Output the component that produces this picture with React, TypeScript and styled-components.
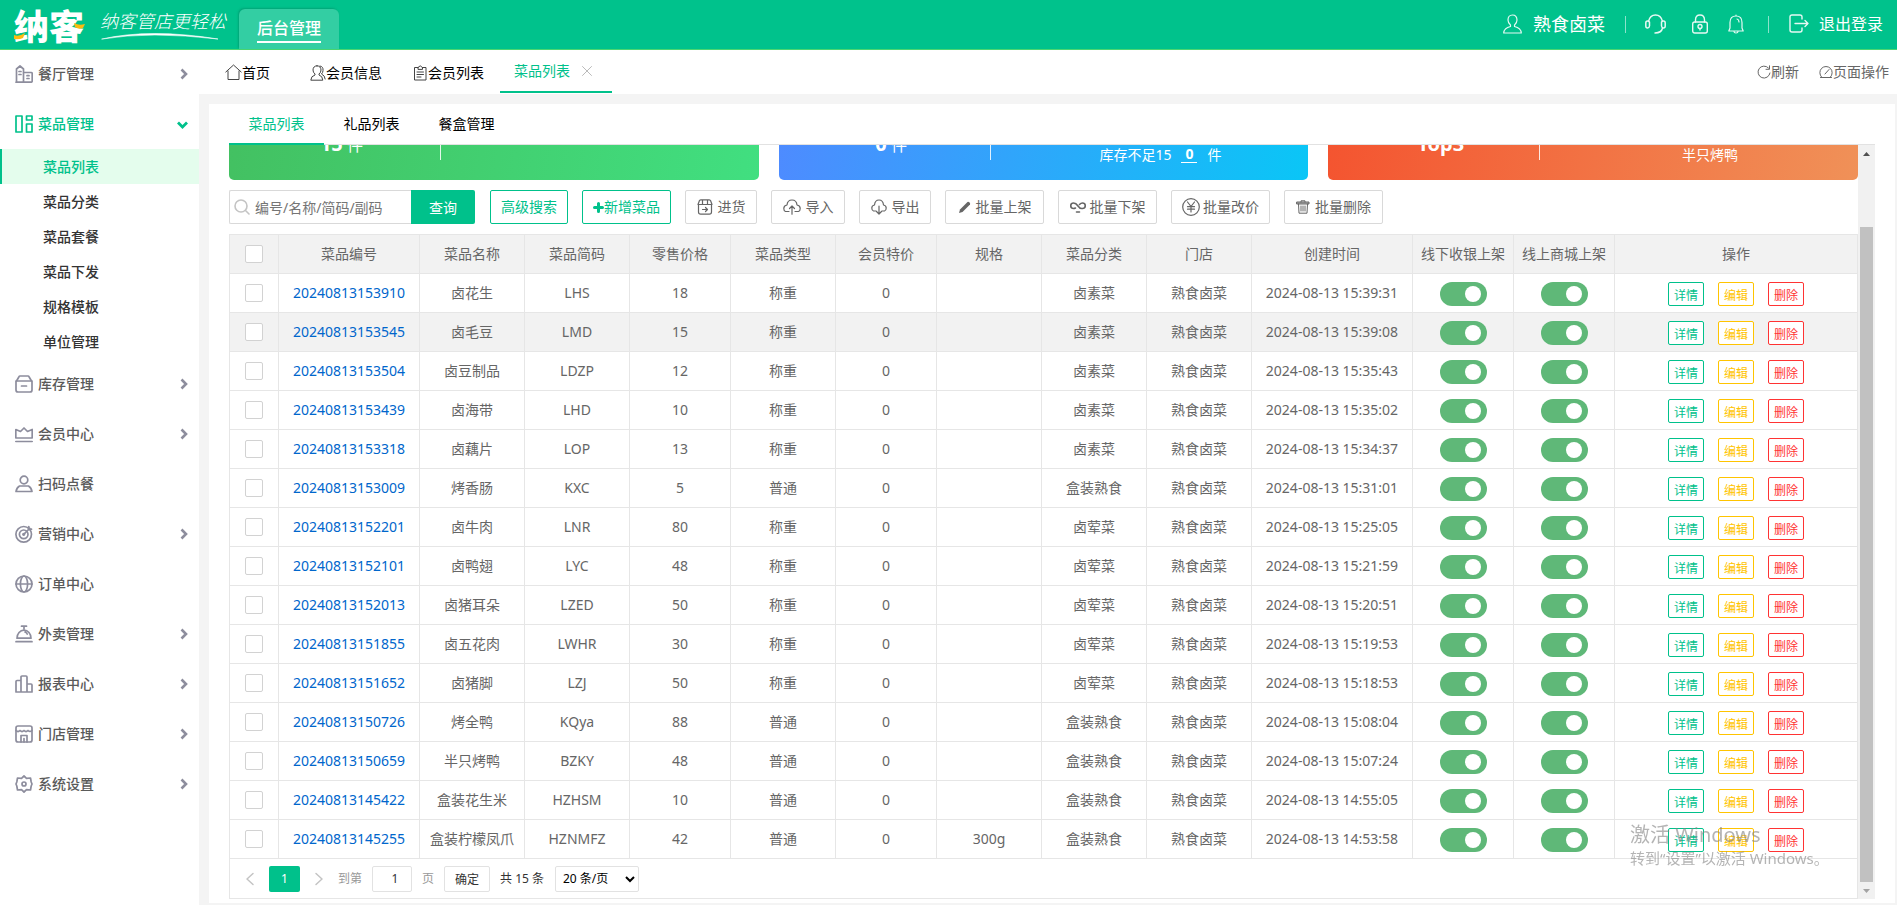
import React, { useLayoutEffect, useRef, useState } from "react";
import styled, { createGlobalStyle, css } from "styled-components";

const GREEN = "#00c18b";
const LINE = "#e6e6e6";
const FONT = '"Noto Sans", "Noto Sans CJK SC", sans-serif';

const GlobalStyle = createGlobalStyle`
  *, *::before, *::after { box-sizing: border-box; }
  body { margin: 0; font: 14px/20px ${FONT}; color: #666; background: #f4f4f4; }
  button, input, select { font-family: inherit; margin: 0; }
  a { color: inherit; text-decoration: none; }
`;

/* ---------- icons ---------- */

const Svg = styled.svg<{ $w: number; $h?: number; $stroke?: number }>`
  width: ${(p) => p.$w}px;
  height: ${(p) => p.$h ?? p.$w}px;
  flex: none;
  display: block;
  fill: none;
  stroke: currentColor;
  stroke-width: ${(p) => p.$stroke ?? 1.2};
  stroke-linecap: round;
  stroke-linejoin: round;
`;

const sideIcons: Record<string, React.ReactNode> = {
  building: (
    <>
      <path d="M1.500 17.200V4L5 1l3.500 3v13.200M1 17.200h15q1.200 0 1.200-1.200V8.500q0-1-1-1H9" />
      <path d="M4 6.500h2M4 9.500h2M12 10.700h2M12 13.500h2" />
    </>
  ),
  grid: (
    <>
      <rect x="1" y="1" width="6" height="16" />
      <rect x="11.500" y="1" width="5.500" height="4" />
      <rect x="11.500" y="9" width="5.500" height="8" />
    </>
  ),
  box: (
    <>
      <path d="M1.500 6 4 1.700Q4.300 1 5 1h8q.700 0 1 .700L16.500 6" />
      <path d="M1 6h16V15q0 2-2 2H3q-2 0-2-2zM6.500 11h5" />
    </>
  ),
  crown: (
    <>
      <path d="M.8 4.500 5.500 6.500 9 3l3.500 3.500 4.700-2v8.500H.8z" />
      <path d="M.8 16.500h16.400" />
    </>
  ),
  person: (
    <>
      <circle cx="9" cy="5" r="3.800" />
      <path d="M1 16.500q.800-4 3.500-5.500h9q2.700 1.500 3.500 5.500z" />
    </>
  ),
  target: (
    <>
      <circle cx="8.700" cy="9.300" r="7.800" />
      <circle cx="8.700" cy="9.300" r="4.300" />
      <path d="m8.700 9.300 6-6M13.800 1.500v2.700h2.700" />
      <circle cx="8.700" cy="9.300" r=".8" />
    </>
  ),
  globe: (
    <>
      <circle cx="9" cy="9" r="8" />
      <ellipse cx="9" cy="9" rx="3.600" ry="8" />
      <path d="M1 9h16" />
    </>
  ),
  bell: (
    <>
      <path d="M6.500 1.200h5M9 1.200v2.500M2 13.200a7 8 0 0 1 14 0zM1 16.700h16M10 7q1.500.500 2.200 2" />
    </>
  ),
  bars: (
    <>
      <path d="M6 17H1V6.500q0-1 1-1h4M6 17V2q0-1 1-1h4q1 0 1 1v15zM12 9h4q1 0 1 1v7h-5" />
    </>
  ),
  shop: (
    <>
      <rect x="1" y="1" width="16" height="16" rx="2" />
      <path d="M1 5.500q2 2 4 0 2 2 4 0 2 2 4 0 2 2 4 0M6 17v-6.500h6V17M9 13.500V17" />
    </>
  ),
  gear: (
    <>
      <path d="M9 1 11.500 3.300l4-.300.700 4L17 9l-.800 2-.700 4-4-.300L9 17l-2.500-2.300-4 .300L1.800 11 1 9l.800-2 .700-4 4 .300z" />
      <circle cx="9" cy="9" r="2" />
    </>
  ),
};

/* ---------- header ---------- */

const Page = styled.div`
  height: 100vh;
  min-height: 600px;
  display: flex;
  flex-direction: column;
`;

const Header = styled.header`
  position: relative;
  z-index: 1;
  flex: none;
  height: 49px;
  display: flex;
  align-items: stretch;
  padding: 0 14px;
  background: #00c28c;
  box-shadow: 0 1px 0 #4bd671;
  color: #fff;
`;

const Logo = styled.div`
  position: relative;
  width: 72px;
  font: 900 35px/49px "Noto Sans CJK SC", sans-serif;
  white-space: nowrap;
`;

const LogoAccent = styled(Svg)`
  position: absolute;
  left: 0;
  top: 10px;
  fill: #fdbb10;
  stroke: none;
`;

const Slogan = styled.div`
  width: 125px;
  margin-left: 14px;
  padding-top: 8px;
  font: italic 300 18px/24px "Noto Sans CJK SC", sans-serif;
  white-space: nowrap;
`;

const TopTab = styled.a`
  width: 100px;
  height: 40px;
  margin: 9px 0 0 14px;
  border-radius: 6px 6px 0 0;
  background: #33cea3;
  box-shadow: -1px -1px 2px rgba(0, 110, 80, 0.35);
  display: flex;
  justify-content: center;
  font-size: 16px;
  font-weight: 500;

  span {
    height: 34px;
    line-height: 38px;
    border-bottom: 2px solid #fff;
  }
`;

const HeaderTools = styled.nav`
  margin-left: auto;
  height: 40px;
  display: flex;
  align-items: center;
  margin-top: 4px;
`;

const Tool = styled.a<{ $size?: number; $gap?: number; $ml?: number }>`
  display: flex;
  align-items: center;
  gap: ${(p) => p.$gap ?? 0}px;
  margin-left: ${(p) => p.$ml ?? 0}px;
  font-size: ${(p) => p.$size ?? 16}px;
  svg { opacity: 0.9; }
`;

const Rule = styled.span<{ $ml: number }>`
  width: 1px;
  height: 17px;
  margin-left: ${(p) => p.$ml}px;
  background: rgba(255, 255, 255, 0.55);
`;

/* ---------- sidebar ---------- */

const Body = styled.div`
  flex: 1;
  min-height: 0;
  display: flex;
`;

const Sidebar = styled.nav`
  flex: none;
  width: 199px;
  background: #fff;
`;

const MenuItem = styled.a<{ $open?: boolean }>`
  height: 50px;
  display: flex;
  align-items: center;
  gap: 5px;
  padding: 0 11px 0 15px;
  font-weight: 500;
  color: ${(p) => (p.$open ? GREEN : "#5a5a5a")};
  svg { color: ${(p) => (p.$open ? GREEN : "#8d8d9d")}; }
`;

const MenuArrow = styled(Svg)`
  margin-left: auto;
  stroke-linecap: butt;
  stroke-linejoin: miter;
`;

const SubItem = styled.a<{ $active?: boolean }>`
  display: block;
  height: 35px;
  line-height: 35px;
  padding-left: 41px;
  border-left: 2px solid ${(p) => (p.$active ? GREEN : "transparent")};
  background: ${(p) => (p.$active ? "#e4fded" : "transparent")};
  color: ${(p) => (p.$active ? GREEN : "#333")};
  font-weight: 500;
`;

/* ---------- page tabs ---------- */

const Main = styled.main`
  flex: 1;
  min-width: 0;
  display: flex;
  flex-direction: column;
`;

const TabBar = styled.div`
  flex: none;
  height: 45px;
  display: flex;
  background: #fff;
  color: #000;
  padding: 0 8px 0 11px;
`;

const PageTab = styled.a`
  display: flex;
  align-items: center;
  padding: 2px 16px 0 15px;
  svg { color: #444; }
`;

const HomeTab = styled(PageTab)`
  padding-right: 25px;
`;

const ActivePageTab = styled.a`
  height: 44px;
  display: flex;
  align-items: center;
  gap: 12px;
  padding: 1px 20px 0 14px;
  border-bottom: 2px solid ${GREEN};
  color: ${GREEN};
  svg { color: #bbb; }
`;

const TabActions = styled.div`
  margin-left: auto;
  display: flex;
  gap: 20px;
`;

const TabAction = styled.button`
  border: 0;
  padding: 0;
  background: none;
  font-size: 14px;
  line-height: 20px;
  color: #666;
  display: flex;
  align-items: center;
`;

/* ---------- card ---------- */

const Card = styled.section`
  flex: 1;
  min-height: 0;
  margin: 10px 2px 2px 10px;
  padding: 0 20px 4px;
  background: #fff;
  display: flex;
  flex-direction: column;
`;

const CardTabs = styled.div`
  flex: none;
  height: 41px;
  display: flex;
  border-bottom: 1px solid #e2e2e2;
`;

const CardTab = styled.a<{ $active?: boolean }>`
  width: 95px;
  height: 41px;
  line-height: 40px;
  text-align: center;
  color: ${(p) => (p.$active ? GREEN : "#000")};
  border-bottom: 2px solid ${(p) => (p.$active ? GREEN : "transparent")};
`;

const ScrollArea = styled.div`
  flex: 1;
  min-height: 0;
  display: flex;
`;

const Viewport = styled.div`
  flex: 1;
  min-width: 0;
  overflow: auto;
  scrollbar-width: none;
`;

const ScrollTrack = styled.div`
  flex: none;
  width: 17px;
  background: #f1f1f1;
  display: flex;
  flex-direction: column;
  align-items: center;
`;

const ScrollArrow = styled.button`
  width: 17px;
  height: 17px;
  border: 0;
  padding: 0;
  background: none;
  display: flex;
  align-items: center;
  justify-content: center;
  color: #505050;
  svg { fill: currentColor; stroke: none; }
  &:disabled { color: #a3a3a3; }
`;

const ScrollThumb = styled.div`
  flex: 10;
  width: 13px;
  background: #c1c1c1;
`;

const ScrollGap = styled.div`
  flex: 1;
`;

const Stats = styled.div`
  display: flex;
  gap: 20px;
  padding: 15px 0 10px;
`;

const Stat = styled.div<{ $from: string; $to: string }>`
  flex: 1;
  height: 96px;
  border-radius: 5px;
  background: linear-gradient(100deg, ${(p) => p.$from}, ${(p) => p.$to});
  color: #fff;
  display: flex;
  align-items: flex-end;
`;

const StatMain = styled.div`
  width: 40%;
  height: 76px;
  margin-bottom: 20px;
  padding: 48px 0 0 14px;
  border-right: 1px solid rgba(255, 255, 255, 0.85);
  text-align: center;
  font-size: 16px;
  line-height: 24px;
  white-space: pre;
  b { font-size: 20px; }
`;

const StatNote = styled.div`
  flex: 1;
  padding: 0 0 15px 22px;
  display: flex;
  justify-content: center;
  gap: 10px;
  b { align-self: flex-start; padding: 0 4px; margin-top: 1px; line-height: 16px; border-bottom: 1px solid #fff; }
`;

const Toolbar = styled.div`
  display: flex;
  gap: 14px;
  padding-bottom: 10px;
`;

const Search = styled.form`
  display: flex;
  width: 246px;
  height: 34px;
  margin-right: 1px;
`;

const SearchField = styled.label`
  flex: 1;
  min-width: 0;
  display: flex;
  align-items: center;
  gap: 5px;
  padding-left: 4px;
  border: 1px solid #d9d9d9;
  border-right: 0;
  border-radius: 2px 0 0 2px;
  color: #c4c4c4;
  input {
    flex: 1;
    min-width: 0;
    border: 0;
    padding: 0;
    outline: 0;
    font-size: 14px;
    color: #333;
    background: none;
  }
  input::placeholder { color: #757575; }
`;

const SearchButton = styled.button`
  width: 64px;
  border: 0;
  border-radius: 0 2px 2px 0;
  background: ${GREEN};
  color: #fff;
  font-size: 14px;
`;

const ToolButton = styled.button<{ $w: number; $gap?: number; $accent?: boolean }>`
  flex: none;
  width: ${(p) => p.$w}px;
  height: 34px;
  padding: 0;
  display: flex;
  align-items: center;
  justify-content: center;
  gap: ${(p) => p.$gap ?? 5}px;
  border: 1px solid ${(p) => (p.$accent ? GREEN : "#d9d9d9")};
  border-radius: 2px;
  background: #fff;
  color: ${(p) => (p.$accent ? GREEN : "#666")};
  font-size: 14px;
  line-height: 20px;
  white-space: nowrap;
`;

/* ---------- table ---------- */

const Grid = styled.table`
  width: 100%;
  table-layout: fixed;
  border-collapse: separate;
  border-spacing: 0;
  border: 1px solid ${LINE};
  border-width: 1px 0 0 1px;

  th, td {
    height: 39px;
    padding: 0;
    border: 1px solid ${LINE};
    border-width: 0 1px 1px 0;
    text-align: center;
    vertical-align: middle;
    font-weight: 400;
    line-height: 20px;
    white-space: nowrap;
  }
  th { background: #f2f2f2; }
`;

const Row = styled.tr<{ $hover?: boolean }>`
  background: ${(p) => (p.$hover ? "#f2f2f2" : "#fff")};
  &:hover { background: #f2f2f2; }
`;

const Code = styled.a`
  color: #0066cc;
`;

const Tick = styled.input`
  appearance: none;
  display: block;
  width: 18px;
  height: 18px;
  margin: 0 auto;
  border: 1px solid #d2d2d2;
  border-radius: 2px;
  background: #fff;
  &:checked { background: ${GREEN}; border-color: ${GREEN}; }
`;

const Switch = styled.input`
  appearance: none;
  display: block;
  width: 47px;
  height: 24px;
  margin: 1px auto 0;
  padding: 4px 6px;
  border-radius: 12px;
  background: #d2d2d2;
  &::before {
    content: "";
    display: block;
    width: 16px;
    height: 16px;
    border-radius: 50%;
    background: #fff;
  }
  &:checked { background: #5fb878; }
  &:checked::before { margin-left: auto; }
`;

const Ops = styled.div`
  display: flex;
  justify-content: center;
  gap: 14px;
  padding-top: 1px;
`;

const OpButton = styled.button<{ $color: string }>`
  width: 36px;
  height: 24px;
  padding: 4px 0 0;
  border: 1px solid ${(p) => p.$color};
  border-radius: 2px;
  background: #fff;
  color: ${(p) => p.$color};
  font-size: 12px;
  line-height: 18px;
`;

const Pager = styled.div`
  height: 40px;
  display: flex;
  align-items: center;
  border: 1px solid ${LINE};
  border-top: 0;
  padding-left: 15px;
  font-size: 12px;
  color: #333;
`;

const pagerBox = css`
  height: 26px;
  border: 1px solid #e2e2e2;
  border-radius: 2px;
  background: #fff;
  font-size: 12px;
  color: #333;
`;

const PagerArrow = styled.button`
  width: 24px;
  height: 26px;
  border: 0;
  padding: 0;
  background: none;
  color: #c4c4c4;
  display: flex;
  align-items: center;
  justify-content: flex-start;
`;

const PagerCurrent = styled.a`
  width: 31px;
  height: 26px;
  line-height: 26px;
  margin-right: 14px;
  border-radius: 2px;
  background: ${GREEN};
  color: #fff;
  text-align: center;
`;

const PagerJump = styled.label`
  display: flex;
  align-items: center;
  gap: 10px;
  color: #999;
  input {
    ${pagerBox}
    width: 40px;
    padding: 0 0 0 6px;
    text-align: center;
  }
`;

const PagerGo = styled.button`
  ${pagerBox}
  width: 46px;
  padding: 1px 0 0;
  margin: 0 10px;
`;

const PagerSize = styled.select`
  ${pagerBox}
  width: 84px;
  margin-left: 11px;
  padding-left: 3px;
  color: #000;
`;

const Watermark = styled.div`
  position: fixed;
  right: 67px;
  bottom: 37px;
  width: 200px;
  pointer-events: none;
  color: rgba(130, 130, 130, 0.6);
  font-size: 15px;
  line-height: 20px;
  white-space: nowrap;
  strong { display: block; font-weight: 400; font-size: 20px; line-height: 26px; }
`;

/* ---------- data ---------- */

type Menu = { icon: string; label: string; arrow?: boolean; children?: string[] };

const menus: Menu[] = [
  { icon: "building", label: "餐厅管理", arrow: true },
  { icon: "grid", label: "菜品管理", arrow: true, children: ["菜品列表", "菜品分类", "菜品套餐", "菜品下发", "规格模板", "单位管理"] },
  { icon: "box", label: "库存管理", arrow: true },
  { icon: "crown", label: "会员中心", arrow: true },
  { icon: "person", label: "扫码点餐" },
  { icon: "target", label: "营销中心", arrow: true },
  { icon: "globe", label: "订单中心" },
  { icon: "bell", label: "外卖管理", arrow: true },
  { icon: "bars", label: "报表中心", arrow: true },
  { icon: "shop", label: "门店管理", arrow: true },
  { icon: "gear", label: "系统设置", arrow: true },
];

const columns: [string, number?][] = [
  ["菜品编号", 141], ["菜品名称", 105], ["菜品简码", 105], ["零售价格", 101], ["菜品类型", 105],
  ["会员特价", 101], ["规格", 105], ["菜品分类", 105], ["门店", 105], ["创建时间", 161],
  ["线下收银上架", 101], ["线上商城上架", 101], ["操作"],
];

const dishes: [string, string, string, string, string, string, string, string][] = [
  ["20240813153910", "卤花生", "LHS", "18", "称重", "", "卤素菜", "15:39:31"],
  ["20240813153545", "卤毛豆", "LMD", "15", "称重", "", "卤素菜", "15:39:08"],
  ["20240813153504", "卤豆制品", "LDZP", "12", "称重", "", "卤素菜", "15:35:43"],
  ["20240813153439", "卤海带", "LHD", "10", "称重", "", "卤素菜", "15:35:02"],
  ["20240813153318", "卤藕片", "LOP", "13", "称重", "", "卤素菜", "15:34:37"],
  ["20240813153009", "烤香肠", "KXC", "5", "普通", "", "盒装熟食", "15:31:01"],
  ["20240813152201", "卤牛肉", "LNR", "80", "称重", "", "卤荤菜", "15:25:05"],
  ["20240813152101", "卤鸭翅", "LYC", "48", "称重", "", "卤荤菜", "15:21:59"],
  ["20240813152013", "卤猪耳朵", "LZED", "50", "称重", "", "卤荤菜", "15:20:51"],
  ["20240813151855", "卤五花肉", "LWHR", "30", "称重", "", "卤荤菜", "15:19:53"],
  ["20240813151652", "卤猪脚", "LZJ", "50", "称重", "", "卤荤菜", "15:18:53"],
  ["20240813150726", "烤全鸭", "KQya", "88", "普通", "", "盒装熟食", "15:08:04"],
  ["20240813150659", "半只烤鸭", "BZKY", "48", "普通", "", "盒装熟食", "15:07:24"],
  ["20240813145422", "盒装花生米", "HZHSM", "10", "普通", "", "盒装熟食", "14:55:05"],
  ["20240813145255", "盒装柠檬凤爪", "HZNMFZ", "42", "普通", "300g", "盒装熟食", "14:53:58"],
];

/* ---------- parts ---------- */

function TopHeader() {
  return (
    <Header>
      <Logo>
        纳客
        <LogoAccent $w={72} $h={30} viewBox="0 0 72 30">
          <path d="M0 25q5 2 11-2l-2 5q-4 2-9 1zM60 13q5 3 11 1l-2 4q-4 2-8-1z" />
        </LogoAccent>
      </Logo>
      <Slogan>
        纳客管店更轻松
        <Svg $w={120} $h={8} $stroke={0.6} viewBox="0 0 120 8">
          <path d="M2 7Q50-4 118 7 50-1 2 7z" fill="#fff" />
        </Svg>
      </Slogan>
      <TopTab href="#"><span>后台管理</span></TopTab>
      <HeaderTools>
        <Tool href="#" $size={18} $gap={11}>
          <Svg $w={19} $h={20} viewBox="0 0 19 20">
            <path d="M9.500 1C6.500 1 5 3 5 6q0 3 2.500 5v1.500Q1 14 .7 19h17.600Q18 14 11.500 12.500V11Q14 9 14 6c0-3-1.500-5-4.500-5z" />
          </Svg>
          熟食卤菜
        </Tool>
        <Rule $ml={20} />
        <Tool href="#" $ml={19} aria-label="客服">
          <Svg $w={21} $h={20} $stroke={1.5} viewBox="0 0 21 20">
            <path d="M3.500 7.500Q5 1 10.500 1t7 6.500M3.500 7h-1Q.8 7 .8 9v3q0 2 1.700 2t2-2V8zM17.500 7h1q1.700 0 1.700 2v3q0 2-1.700 2t-2-2V8zM17.500 14q-1 5-7.500 5" />
          </Svg>
        </Tool>
        <Tool href="#" $ml={26} aria-label="锁屏">
          <Svg $w={16} $h={20} $stroke={1.4} viewBox="0 0 16 20">
            <rect x=".7" y="8" width="14.600" height="11" rx="2" />
            <path d="M3.500 8V6Q3.500 1 8 1t4.500 5v2M8 14.500V16" />
            <circle cx="8" cy="12.500" r="2" />
          </Svg>
        </Tool>
        <Tool href="#" $ml={20} aria-label="通知">
          <Svg $w={16} $h={20} viewBox="0 0 16 20">
            <path d="M8 1v1M.8 17h14.400L14 14V8.500Q14 2 8 2T2 8.500V14zM6 17.500q0 1.500 2 1.500t2-1.500M9 5q2 .5 2 3" />
          </Svg>
        </Tool>
        <Rule $ml={24} />
        <Tool href="#" $ml={20} $gap={10}>
          <Svg $w={20} $stroke={1.4} viewBox="0 0 20 20">
            <path d="M13 5V3q0-2-2-2H3Q1 1 1 3v13q0 2 2 2h8q2 0 2-2v-2M6 9.500h13M16 6.500l3 3-3 3" />
          </Svg>
          退出登录
        </Tool>
      </HeaderTools>
    </Header>
  );
}

function SideMenu() {
  return (
    <Sidebar>
      {menus.map((m) => (
        <React.Fragment key={m.label}>
          <MenuItem href="#" $open={!!m.children}>
            <Svg $w={18} $stroke={1.7} viewBox="0 0 18 18">{sideIcons[m.icon]}</Svg>
            {m.label}
            {m.arrow &&
              (m.children ? (
                <MenuArrow $w={11} $stroke={2.8} viewBox="0 0 11 11"><path d="m1 3.500 4.500 4.500L10 3.500" /></MenuArrow>
              ) : (
                <MenuArrow $w={8} $h={12} $stroke={2.6} viewBox="0 0 8 12"><path d="m1.500 1.500 4.500 4.500-4.500 4.500" /></MenuArrow>
              ))}
          </MenuItem>
          {m.children?.map((c, i) => (
            <SubItem key={c} href="#" $active={i === 0}>{c}</SubItem>
          ))}
        </React.Fragment>
      ))}
    </Sidebar>
  );
}

function PageTabs() {
  return (
    <TabBar>
      <HomeTab href="#">
        <Svg $w={17} $stroke={1} viewBox="0 0 17 17"><path d="M.8 8 8.500 1l7.700 7M3 7v8.500h11V7" /></Svg>
        首页
      </HomeTab>
      <PageTab href="#">
        <Svg $w={16} $stroke={1} viewBox="0 0 16 16">
          <path d="M7 .8C4.500.8 3 2.500 3 5q0 2.500 2 4v1Q1 11 .8 15.200h12Q12.600 11 9 10V9q2-1.500 2-4C11 2.500 9.500.8 7 .8zM10 1q3.500.5 3 4.500 0 2-1.500 3.500Q15 10.500 15.200 14" />
        </Svg>
        会员信息
      </PageTab>
      <PageTab href="#">
        <Svg $w={15} $h={16} $stroke={1} viewBox="0 0 15 16">
          <path d="M5 2.500H1.500v12.500h11.500V2.500H9.500M5 4V2.500L7.200.8l2.300 1.700V4zM4 7h6.500M4 9.500h6.500M4 12h4" />
        </Svg>
        会员列表
      </PageTab>
      <ActivePageTab href="#">
        菜品列表
        <Svg $w={10} $stroke={1} viewBox="0 0 10 10"><path d="m.5.500 9 9m0-9-9 9" /></Svg>
      </ActivePageTab>
      <TabActions>
        <TabAction type="button">
          <Svg $w={14} $stroke={1} viewBox="0 0 14 14"><path d="M11.500 3A6 6 0 1 0 13 8M12.500.8v3.500H9" /></Svg>
          刷新
        </TabAction>
        <TabAction type="button">
          <Svg $w={14} $stroke={1} viewBox="0 0 14 14"><path d="M2.500 12A6.200 6.200 0 1 1 11.500 12M1.500 12.500h11M6 9l4-4.500" /></Svg>
          页面操作
        </TabAction>
      </TabActions>
    </TabBar>
  );
}

function Actions() {
  return (
    <Toolbar>
      <Search onSubmit={(e) => e.preventDefault()}>
        <SearchField>
          <Svg $w={16} $stroke={1.6} viewBox="0 0 16 16"><circle cx="7" cy="7" r="6" /><path d="m11.500 11.500 3.500 3.500" /></Svg>
          <input aria-label="搜索菜品" placeholder="编号/名称/简码/副码" />
        </SearchField>
        <SearchButton type="submit">查询</SearchButton>
      </Search>
      <ToolButton type="button" $w={78} $accent>高级搜索</ToolButton>
      <ToolButton type="button" $w={89} $gap={0} $accent>
        <Svg $w={11} $stroke={3} viewBox="0 0 11 11"><path d="M5.500 1.500v8M1.500 5.500h8" /></Svg>
        新增菜品
      </ToolButton>
      <ToolButton type="button" $w={72}>
        <Svg $w={16} viewBox="0 0 16 16">
          <path d="M1 5.500 2.500 1.500Q3 .8 4 .8h8q1 0 1.500.700L15 5.500zM1.500 5.500V13q0 2.200 2.200 2.200h8.600q2.200 0 2.200-2.200V5.500M5.500 1v4M10.500 1v4M5.500 10.500H10M8.500 8.500l2 2-2 2" />
        </Svg>
        进货
      </ToolButton>
      <ToolButton type="button" $w={74}>
        <Svg $w={18} $h={16} viewBox="0 0 18 16">
          <path d="M6 12.500H2.500Q.8 12 .8 9.500.8 6.500 4 6 4.500 1 9 1t5 5q3.200.500 3.200 3.500 0 2.500-1.700 3H12M9 15.200V7M6.500 9.500 9 7l2.500 2.500" />
        </Svg>
        导入
      </ToolButton>
      <ToolButton type="button" $w={72}>
        <Svg $w={16} viewBox="0 0 16 16">
          <path d="M5 12H2.500Q.8 11.500.8 9 .8 6.500 3.500 6 4 1 8 1t4.500 5q2.700.500 2.700 3 0 2.500-1.700 3H11M8 7v8M5.500 12.500 8 15l2.500-2.500" />
        </Svg>
        导出
      </ToolButton>
      <ToolButton type="button" $w={99}>
        <Svg $w={13} viewBox="0 0 13 13"><path d="m1 12 1-3.500L9.500 1q1-.5 2 .5t.5 2L4.500 11z" fill="currentColor" stroke="none" /></Svg>
        批量上架
      </ToolButton>
      <ToolButton type="button" $w={99} $gap={4}>
        <Svg $w={16} $h={12} $stroke={1.6} viewBox="0 0 16 12">
          <path d="M5.500 7Q4.500 7.500 3.500 7.500A2.700 2.700 0 0 1 3.500 2Q6 2 8 5t4.500 2.500a2.700 2.700 0 0 0 0-5.500Q11 2 9.500 3.500M6.500 11h3" />
        </Svg>
        批量下架
      </ToolButton>
      <ToolButton type="button" $w={99} $gap={3}>
        <Svg $w={18} viewBox="0 0 18 18">
          <circle cx="9" cy="9" r="8.300" /><path d="m5.500 4 3.500 4.500L12.500 4M9 8.500V14M5.500 8.700h7M5.500 11.200h7" />
        </Svg>
        批量改价
      </ToolButton>
      <ToolButton type="button" $w={99}>
        <Svg $w={14} $stroke={1} viewBox="0 0 14 14">
          <path d="M1 2h12v2H1z" fill="#aaa" />
          <path d="M5 2V.8h4V2M2.500 4l.5 9.200h8L11.500 4M5 6v5M7 6v5M9 6v5" />
        </Svg>
        批量删除
      </ToolButton>
    </Toolbar>
  );
}

function DishTable() {
  return (
    <Grid>
      <colgroup>
        <col width={49} />
        {columns.map(([name, w]) => <col key={name} width={w} />)}
      </colgroup>
      <thead>
        <tr>
          <th><Tick type="checkbox" aria-label="全选" /></th>
          {columns.map(([name]) => <th key={name} scope="col">{name}</th>)}
        </tr>
      </thead>
      <tbody>
        {dishes.map(([id, name, code, price, type, spec, group, time], i) => (
          <Row key={id} $hover={i === 1}>
            <td><Tick type="checkbox" aria-label={name} /></td>
            <td><Code href="#">{id}</Code></td>
            <td>{name}</td>
            <td>{code}</td>
            <td>{price}</td>
            <td>{type}</td>
            <td>0</td>
            <td>{spec}</td>
            <td>{group}</td>
            <td>熟食卤菜</td>
            <td>2024-08-13 {time}</td>
            <td><Switch type="checkbox" role="switch" defaultChecked aria-label="线下收银上架" /></td>
            <td><Switch type="checkbox" role="switch" defaultChecked aria-label="线上商城上架" /></td>
            <td>
              <Ops>
                <OpButton type="button" $color={GREEN}>详情</OpButton>
                <OpButton type="button" $color="#ffc400">编辑</OpButton>
                <OpButton type="button" $color="#ff3333">删除</OpButton>
              </Ops>
            </td>
          </Row>
        ))}
      </tbody>
    </Grid>
  );
}

function Pagination() {
  const [page, setPage] = useState("1");
  return (
    <Pager>
      <PagerArrow type="button" aria-label="上一页">
        <Svg $w={10} $h={14} $stroke={1.5} viewBox="0 0 10 14"><path d="M8 1.500 2 7l6 5.500" /></Svg>
      </PagerArrow>
      <PagerCurrent href="#">1</PagerCurrent>
      <PagerArrow type="button" aria-label="下一页">
        <Svg $w={10} $h={14} $stroke={1.5} viewBox="0 0 10 14"><path d="m2 1.500 6 5.500-6 5.500" /></Svg>
      </PagerArrow>
      <PagerJump>
        到第
        <input value={page} onChange={(e) => setPage(e.target.value)} />
        页
      </PagerJump>
      <PagerGo type="button">确定</PagerGo>
      <span>共 15 条</span>
      <PagerSize aria-label="每页条数" defaultValue="20">
        <option value="20">20 条/页</option>
        <option value="50">50 条/页</option>
      </PagerSize>
    </Pager>
  );
}

export default function App() {
  const view = useRef<HTMLDivElement>(null);

  useLayoutEffect(() => {
    if (view.current) view.current.scrollTop = view.current.scrollHeight;
  }, []);

  const scrollBy = (dy: number) => view.current?.scrollBy({ top: dy });

  return (
    <Page>
      <GlobalStyle />
      <TopHeader />
      <Body>
        <SideMenu />
        <Main>
          <PageTabs />
          <Card>
            <CardTabs>
              <CardTab href="#" $active>菜品列表</CardTab>
              <CardTab href="#">礼品列表</CardTab>
              <CardTab href="#">餐盒管理</CardTab>
            </CardTabs>
            <ScrollArea>
              <Viewport ref={view}>
                <Stats>
                  <Stat $from="#43c061" $to="#41df80">
                    <StatMain><b>15</b> 件</StatMain>
                  </Stat>
                  <Stat $from="#4f8aff" $to="#0ac6f6">
                    <StatMain><b>0</b> 件</StatMain>
                    <StatNote><span>库存不足15</span><b>0</b><span>件</span></StatNote>
                  </Stat>
                  <Stat $from="#f4532f" $to="#f09158">
                    <StatMain><b>Top3</b></StatMain>
                    <StatNote>半只烤鸭</StatNote>
                  </Stat>
                </Stats>
                <Actions />
                <DishTable />
                <Pagination />
              </Viewport>
              <ScrollTrack>
                <ScrollArrow type="button" aria-label="向上滚动" onClick={() => scrollBy(-40)}>
                  <Svg $w={7} $h={4} viewBox="0 0 7 4"><path d="M0 4 3.500 0 7 4z" /></Svg>
                </ScrollArrow>
                <ScrollGap />
                <ScrollThumb />
                <ScrollArrow type="button" aria-label="向下滚动" disabled>
                  <Svg $w={7} $h={4} viewBox="0 0 7 4"><path d="M0 0 3.500 4 7 0z" /></Svg>
                </ScrollArrow>
              </ScrollTrack>
            </ScrollArea>
          </Card>
        </Main>
      </Body>
      <Watermark>
        <strong>激活 Windows</strong>
        转到“设置”以激活 Windows。
      </Watermark>
    </Page>
  );
}
